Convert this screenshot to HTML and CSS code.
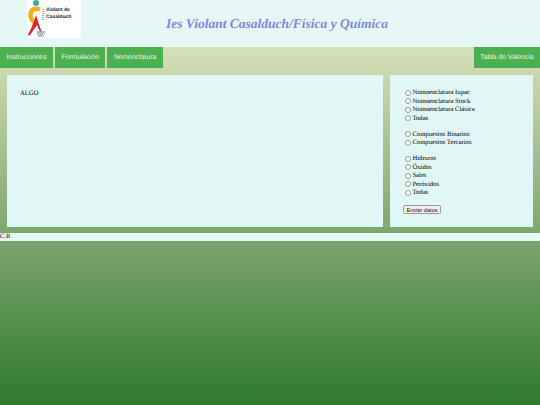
FILE: index.html
```html
<!DOCTYPE html>
<html lang="es">
<head>
<meta charset="utf-8">
<title>Ies Violant Casalduch</title>
<link rel="stylesheet" href="styles.css">
</head>
<body>
<header class="header">
  <div class="logo">
    <svg class="logo-mark" viewBox="0 0 54 38" width="54" height="38" aria-hidden="true">
      <circle cx="9" cy="3" r="3" fill="#3fa79b"/>
      <path d="M13 9.500 C7 7 3.500 10.500 3.500 15 C3.500 19 6 21.500 9 22.500" fill="none" stroke="#f2b01e" stroke-width="4.500"/>
      <path d="M9 15 C10.500 20 13 27 15 33 L12 30 L10 25 L3 35 L0.500 35.500 C3 31 6.500 24 9 15 Z" fill="#d9262e"/>
      <path d="M10 32 h8 M10.500 34 h7 M11.500 36 h5" stroke="#5c86a8" stroke-width="1.300" stroke-dasharray="1.400 .7"/>
      <path d="M16 9 v11" stroke="#777" stroke-width="1.200" stroke-dasharray="1 1"/>
    </svg>
    <div class="logo-text">Violant de<br>Casalduch</div>
  </div>
  <h1 class="title">Ies Violant Casalduch/Física y Química</h1>
</header>
<nav class="nav">
  <a class="nav-item" href="#">Instrucciones</a>
  <a class="nav-item" href="#">Formulación</a>
  <a class="nav-item" href="#">Nomenclatura</a>
  <a class="nav-item nav-right" href="#">Tabla de Valencia</a>
</nav>
<main class="main">
  <section class="card content"><p class="algo">ALGO</p></section>
  <form class="card side">
    <div class="group">
      <label class="opt"><input type="radio" name="a"><span>Nomnenclatura Iupac</span></label>
      <label class="opt"><input type="radio" name="a"><span>Nomnenclatura Stock</span></label>
      <label class="opt"><input type="radio" name="a"><span>Nomnenclatura Clásica</span></label>
      <label class="opt"><input type="radio" name="a"><span>Todas</span></label>
    </div>
    <div class="group">
      <label class="opt"><input type="radio" name="b"><span>Compuestos Binarios</span></label>
      <label class="opt"><input type="radio" name="b"><span>Compuestos Tercarios</span></label>
    </div>
    <div class="group">
      <label class="opt"><input type="radio" name="c"><span>Hidruros</span></label>
      <label class="opt"><input type="radio" name="c"><span>Óxidos</span></label>
      <label class="opt"><input type="radio" name="c"><span>Sales</span></label>
      <label class="opt"><input type="radio" name="c"><span>Peróxidos</span></label>
      <label class="opt"><input type="radio" name="c"><span>Todas</span></label>
    </div>
    <button class="send" type="button">Enviar datos</button>
  </form>
</main>
<footer class="footer">C.R</footer>
</body>
</html>
```
FILE: styles.css
```css
html { height: 100%; }
body {
  margin: 0;
  min-height: 405px;
  background: linear-gradient(180deg, #e8ecd0 0%, #d6dfb8 12%, #7ea56e 58%, #2f7a2f 100%);
  font-family: "Liberation Serif", serif;
  font-size: 6.670px;
  color: #000;
  overflow: hidden;
  text-rendering: geometricPrecision;
}
.header {
  height: 47px;
  background: #e6f8f5;
  display: flex;
}
.logo {
  width: 54px;
  height: 38px;
  margin-left: 27px;
  background: #fff;
  display: flex;
  align-items: flex-start;
  position: relative;
}
.logo-mark { position: absolute; left: 0; top: 0; }
.logo-text {
  margin: 7px 0 0 19px;
  font: bold 5px/7px "Liberation Sans", sans-serif;
  color: #222;
  white-space: nowrap;
  position: relative;
}
.title {
  margin: 14.500px 0 0 85px;
  font: italic bold 13.500px/18px "Liberation Serif", serif;
  color: #8186df;
  white-space: nowrap;
}
.nav {
  display: flex;
  gap: 2px;
  height: 21px;
}
.nav-item {
  background: #4caf50;
  color: #eef8ee;
  text-decoration: none;
  font: 6.800px/21px "Liberation Sans", sans-serif;
  padding: 0 6.500px;
}
.nav-right { margin-left: auto; }
.main {
  display: flex;
  gap: 7px;
  padding: 7px 7px 0;
  height: 152px;
}
.card {
  background: #e0f7f5;
  box-sizing: border-box;
  height: 152px;
}
.content { flex: 1; padding: 13.500px 13px; }
.algo { margin: 0; line-height: 9px; }
.side {
  width: 143px;
  padding: 13.500px 0 0 15px;
  display: flex;
  flex-direction: column;
  align-items: flex-start;
}
.group { margin-bottom: 7.500px; }
.opt {
  display: flex;
  align-items: center;
  height: 8.500px;
  white-space: nowrap;
}
.opt input {
  appearance: none;
  width: 6.400px;
  height: 6.400px;
  margin: 0 1px 0 0;
  border: 0.400px solid #999;
  border-radius: 50%;
  background: #fff;
  box-sizing: border-box;
}
.send {
  margin: 0 0 0 -2px;
  height: 9px;
  width: 38px;
  padding: 0;
  font: 5.600px/8px "Liberation Sans", sans-serif;
  white-space: nowrap;
  color: #111;
  background: #efefef;
  border: 0.500px solid #999;
  border-radius: 1.500px;
}
.footer {
  margin-top: 6px;
  height: 8px;
  background: #e6f8f5;
  line-height: 8px;
}
```
